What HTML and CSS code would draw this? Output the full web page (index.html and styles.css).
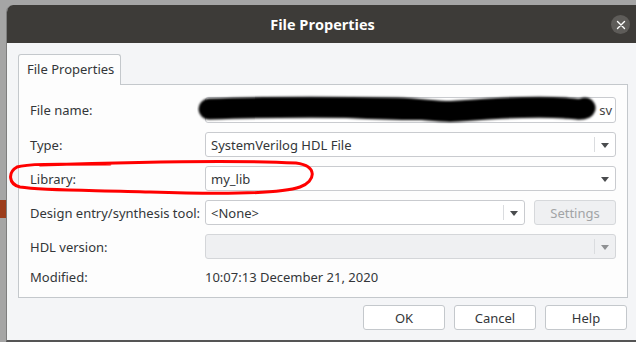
FILE: index.html
```html
<!DOCTYPE html>
<html>
<head>
<meta charset="utf-8">
<link rel="stylesheet" href="styles.css">
</head>
<body>
<div class="screen">
  <div class="behind"><div class="behind-strip"></div></div>
  <div class="dialog">
    <div class="titlebar">
      <span class="title">File Properties</span>
      <button class="close" aria-label="Close">
        <svg width="10" height="10" viewBox="0 0 10 10"><path d="M1.5 1.5 L8.5 8.5 M8.5 1.5 L1.5 8.5" stroke="#fff" stroke-width="1.4" stroke-linecap="round"/></svg>
      </button>
    </div>
    <div class="content">
      <div class="tabs">
        <div class="tab">File Properties</div>
      </div>
      <div class="pane">
        <div class="form">
          <div class="label">File name:</div>
          <div class="field field-name">
            <span class="name-end">sv</span>
            <svg class="scribble" width="420" height="32" viewBox="0 0 420 32">
              <defs><filter id="blur" filterUnits="userSpaceOnUse" x="0" y="0" width="420" height="32"><feGaussianBlur stdDeviation="1.2"/></filter></defs>
              <g filter="url(#blur)" fill="none" stroke="#000" stroke-linecap="round" stroke-linejoin="round">
                <path d="M12 15 C 60 13, 130 13, 200 14 C 230 15, 245 19, 262 17 C 300 14, 340 12, 368 14 C 378 15, 384 16, 388 14" stroke-width="21"/>
                <path d="M150 20 C 190 22, 230 23, 250 21" stroke-width="8"/>
                <path d="M290 9 C 320 8, 350 9, 370 10" stroke-width="6"/>
              </g>
            </svg>
          </div>

          <div class="label">Type:</div>
          <div class="field combo">
            <span class="value">SystemVerilog HDL File</span>
            <span class="sep"></span><span class="arrow"></span>
          </div>

          <div class="label">Library:</div>
          <div class="field combo">
            <span class="value">my_lib</span>
            <span class="arrow"></span>
          </div>

          <div class="label">Design entry/synthesis tool:</div>
          <div class="split">
            <div class="field combo">
              <span class="value">&lt;None&gt;</span>
              <span class="sep"></span><span class="arrow"></span>
            </div>
            <button class="btn btn-disabled">Settings</button>
          </div>

          <div class="label">HDL version:</div>
          <div class="field combo disabled">
            <span class="value"></span>
            <span class="sep"></span><span class="arrow"></span>
          </div>

          <div class="label">Modified:</div>
          <div class="mod-value">10:07:13 December 21, 2020</div>
        </div>
      </div>
      <div class="actions">
        <button class="btn">OK</button>
        <button class="btn">Cancel</button>
        <button class="btn">Help</button>
      </div>
    </div>
  </div>
  <svg class="annotation" width="636" height="342" viewBox="0 0 636 342">
    <path d="M40 165 C 130 162, 240 160, 296 163 C 318 166, 316 181, 300 187 C 280 194, 210 194, 150 192 C 100 190, 45 191, 20 187 C 8 184, 8 172, 17 167 C 26 164, 50 164, 110 164" stroke="#f00" stroke-width="3" fill="none" stroke-linecap="round" stroke-linejoin="round"/>
  </svg>
</div>
</body>
</html>
```
FILE: styles.css
```css
* { box-sizing: border-box; }
html, body {
  margin: 0;
  padding: 0;
}
body {
  width: 636px;
  height: 342px;
  overflow: hidden;
  background: #a5a5a5;
  font-family: "Noto Sans", "Open Sans", sans-serif;
  font-size: 13px;
  color: #333639;
}
.screen {
  position: relative;
  display: flex;
  height: 342px;
  padding-top: 5px;
}
.behind {
  width: 6px;
  display: flex;
  flex-direction: column;
  padding-top: 195px;
}
.behind-strip {
  height: 18px;
  background: #9c3d1c;
}
.dialog {
  flex: 1;
  display: flex;
  flex-direction: column;
  background: #f4f5f7;
  border-left: 1px solid #7e7e7e;
  border-bottom: 2px solid #555555;
  border-radius: 7px 0 0 0;
  overflow: hidden;
}
.titlebar {
  position: relative;
  height: 38px;
  background: #3d3b38;
  display: flex;
  align-items: center;
  justify-content: center;
  flex-shrink: 0;
}
.title {
  color: #ffffff;
  font-family: "Open Sans", "Noto Sans", sans-serif;
  font-weight: bold;
  font-size: 14.5px;
  margin-left: 2px;
}
.close {
  position: absolute;
  right: 6px;
  top: 10px;
  width: 19px;
  height: 19px;
  border-radius: 50%;
  border: none;
  background: #5e5c59;
  padding: 0;
  display: flex;
  align-items: center;
  justify-content: center;
}
.content {
  flex: 1;
  display: flex;
  flex-direction: column;
  padding: 11px 8px 0 11px;
}
.tabs {
  display: flex;
  margin-bottom: -1px;
  position: relative;
  z-index: 1;
}
.tab {
  width: 103px;
  height: 31px;
  background: #fdfdfd;
  border: 1px solid #c4c8cc;
  border-bottom: none;
  border-radius: 3px 3px 0 0;
  padding: 5px 0 0 8px;
  color: #333639;
}
.pane {
  height: 214px;
  background: #fdfdfd;
  border: 1px solid #c4c8cc;
  padding: 12px 11px 0 11px;
}
.form {
  display: grid;
  grid-template-columns: 175px 1fr;
  grid-template-rows: 26px 25px 25px 25px 25px 17px;
  row-gap: 9px;
  align-items: center;
}
.label {
  color: #333639;
  white-space: nowrap;
}
.field {
  position: relative;
  height: 100%;
  background: #ffffff;
  border: 1px solid #c9cbcf;
  border-radius: 3px;
  display: flex;
  align-items: center;
  padding-left: 5px;
}
.field-name {
  justify-content: flex-end;
  padding-right: 3px;
}
.name-end {
  color: #444;
  position: relative;
  z-index: 0;
}
.scribble {
  position: absolute;
  left: -9px;
  top: -4px;
  z-index: 1;
}
.combo .value {
  flex: 1;
  white-space: nowrap;
}
.sep {
  width: 1px;
  align-self: stretch;
  margin: 4px 0;
  background: #dadcdf;
}
.arrow {
  width: 20px;
  height: 100%;
  display: flex;
  align-items: center;
  justify-content: center;
}
.arrow::after {
  content: "";
  border-left: 4.5px solid transparent;
  border-right: 4.5px solid transparent;
  border-top: 5px solid #4a4c4e;
  margin-top: 1px;
}
.combo.disabled {
  background: #eff0f2;
  border-color: #d4d6d9;
}
.combo.disabled .arrow::after {
  border-top-color: #8e9092;
}
.split {
  height: 100%;
  display: flex;
  gap: 9px;
}
.split .combo {
  width: 320px;
}
.btn {
  font-family: "Noto Sans", "Open Sans", sans-serif;
  font-size: 13px;
  color: #333639;
  background: #ffffff;
  border: 1px solid #c4c8cc;
  border-radius: 3px;
  height: 25px;
  width: 82px;
  padding: 0;
}
.split .btn {
  height: 100%;
  flex: 1;
}
.btn-disabled {
  background: #eff0f2;
  border-color: #d6d8db;
  color: #a2a4a6;
}
.mod-value {
  color: #333639;
}
.actions {
  display: flex;
  justify-content: flex-end;
  gap: 9px;
  padding-top: 7px;
  padding-right: 1px;
}
.annotation {
  position: absolute;
  left: 0;
  top: 0;
  pointer-events: none;
}
```
